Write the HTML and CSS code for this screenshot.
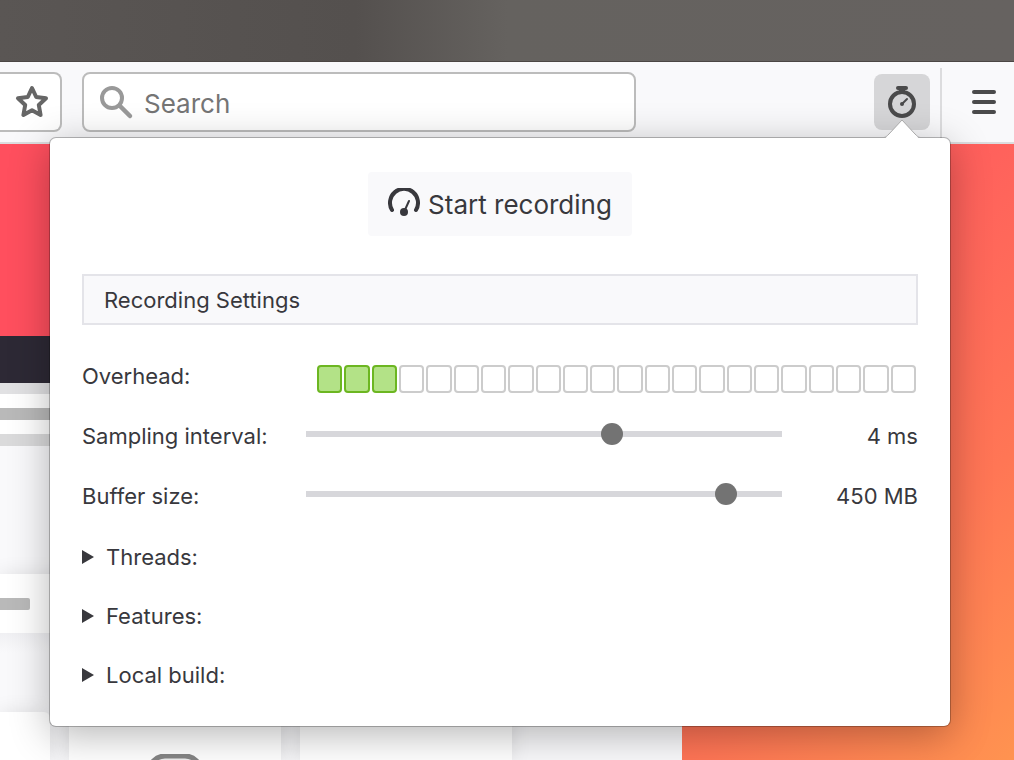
FILE: index.html
```
<!DOCTYPE html>
<html lang="en">
<head>
<meta charset="utf-8">
<title>Profiler popup</title>
<link rel="stylesheet" href="styles.css">
</head>
<body>
<div class="browser">
  <div class="titlebar"></div>
  <header class="toolbar">
    <div class="urlbar">
      <button class="star" type="button" aria-label="Bookmark">
        <svg width="36" height="36" viewBox="0 0 36 36"><path d="M18 4l4.200 9 9.800 1.200-7.200 6.800 1.800 10-8.600-4.800L9.400 31l1.800-10L4 14.200l9.800-1.200z" fill="none" stroke="#666" stroke-width="4" stroke-linejoin="round"/></svg>
      </button>
    </div>
    <label class="search">
      <svg width="36" height="36" viewBox="0 0 36 36"><circle cx="14" cy="14" r="10" fill="none" stroke="#999" stroke-width="4"/><path d="M21.500 21.500L32 32" stroke="#999" stroke-width="4.500" stroke-linecap="round"/></svg>
      <input type="search" placeholder="Search" aria-label="Search">
    </label>
    <div class="actions">
      <button class="profiler" type="button" aria-label="Profiler">
        <svg width="32" height="36" viewBox="0 0 32 36"><circle cx="16" cy="20" r="12" fill="none" stroke="#4a4a4b" stroke-width="4"/><rect x="10" y="2" width="12" height="4" rx="2" fill="#4a4a4b"/><path d="M13 5h6v4h-6z" fill="#4a4a4b"/><path d="M16 20l5-5" stroke="#4a4a4b" stroke-width="2" stroke-linecap="round"/><circle cx="16" cy="20" r="2" fill="#4a4a4b"/></svg>
      </button>
      <span class="divider"></span>
      <button class="menu" type="button" aria-label="Menu">
        <svg width="24" height="24" viewBox="0 0 24 24"><path d="M2 2h20M2 12h20M2 22h20" stroke="#4a4a4b" stroke-width="4" stroke-linecap="round"/></svg>
      </button>
    </div>
  </header>
  <main class="page">
    <div class="site">
      <div class="hero"></div>
      <div class="nav"></div>
      <div class="lines"><span class="line light"></span><span class="line dark"></span><span class="line"></span></div>
      <div class="blank"></div>
      <div class="band"><span class="stub"></span></div>
      <div class="space"></div>
      <div class="cards">
        <div class="card first"></div>
        <div class="card"><svg width="56" height="40" viewBox="0 0 56 40"><rect x="2" y="2" width="52" height="60" rx="16" fill="#eee" stroke="#858585" stroke-width="5"/></svg></div>
        <div class="card"></div>
      </div>
    </div>
  </main>

  <section class="popup" aria-label="Profiler">
    <svg class="arrow" width="36" height="20" viewBox="0 0 36 20"><path d="M0 20C2 19 3 17 5 15L18 1l13 14c2 2 3 4 5 5z" fill="#fff"/><path d="M0 18.500C2 18 3 17 5 15L18 1l13 14c2 2 3 3 5 3.500" fill="none" stroke="#aaa" stroke-width="1"/></svg>
    <button class="start" type="button">
      <svg width="32" height="32" viewBox="0 0 32 32"><path d="M4 22A14 14 0 1 1 28 22" fill="none" stroke="#38383d" stroke-width="4" stroke-linecap="round"/><circle cx="16" cy="24" r="4" fill="#38383d"/><path d="M16 24l5-11" stroke="#38383d" stroke-width="2" stroke-linecap="round"/></svg>
      Start recording
    </button>
    <h1 class="heading">Recording Settings</h1>
    <div class="settings">
      <div class="row">
        <span>Overhead:</span>
        <div class="meter">
          <i class="on"></i><i class="on"></i><i class="on"></i><i></i><i></i><i></i><i></i><i></i><i></i><i></i><i></i><i></i><i></i><i></i><i></i><i></i><i></i><i></i><i></i><i></i><i></i><i></i>
        </div>
      </div>
      <div class="row">
        <label for="interval">Sampling interval:</label>
        <input id="interval" type="range" min="0" max="100" value="65">
        <output for="interval">4 ms</output>
      </div>
      <div class="row">
        <label for="buffer">Buffer size:</label>
        <input id="buffer" type="range" min="0" max="100" value="90">
        <output for="buffer">450 MB</output>
      </div>
    </div>
    <div class="sections">
      <details><summary>Threads:</summary></details>
      <details><summary>Features:</summary></details>
      <details><summary>Local build:</summary></details>
    </div>
  </section>
</div>
</body>
</html>
```
FILE: styles.css
```
* { box-sizing: border-box; }
body {
  margin: 0;
  font-family: Inter, "Liberation Sans", sans-serif;
  font-size: 22px;
  color: #38383d;
}
button { border: 0; padding: 0; font: inherit; color: inherit; background: none; }
svg { display: block; flex: none; }
.browser {
  position: relative;
  display: flex;
  flex-direction: column;
  min-height: 100vh;
  overflow: hidden;
}
.titlebar {
  height: 62px;
  background: linear-gradient(90deg, #5a5654 0%, #54504e 35%, #65625f 50%, #666260 100%);
  border-bottom: 1px solid #4b4644;
}
.toolbar {
  display: flex;
  align-items: flex-start;
  height: 82px;
  padding-top: 10px;
  background: #f9f9fb;
  border-bottom: 2px solid #dcdcde;
}
.urlbar, .search {
  display: flex;
  align-items: center;
  height: 60px;
  background: #fff;
  border: 2px solid #bcbcbc;
  border-radius: 8px;
}
.urlbar {
  width: 62px;
  border-left: 0;
  border-radius: 0 8px 8px 0;
  padding-left: 14px;
}
.search {
  flex: 0 1 554px;
  margin-left: 20px;
  padding: 0 14px;
  gap: 10px;
}
.search input {
  flex: 1;
  min-width: 0;
  border: 0;
  padding: 2px 0 0;
  outline: 0;
  background: none;
  font: inherit;
  font-size: 26px;
}
.search input::placeholder { color: #757575; opacity: 1; }
.actions {
  display: flex;
  align-items: flex-start;
  margin-left: auto;
  padding-right: 18px;
}
.profiler {
  display: flex;
  justify-content: center;
  width: 56px;
  height: 56px;
  margin-top: 2px;
  padding-top: 10px;
  background: #d6d6d8;
  border-radius: 8px;
}
.divider {
  width: 2px;
  height: 74px;
  margin: -4px 30px 0 10px;
  background: #dcdcde;
}
.menu { margin-top: 18px; }
.page {
  flex: 1;
  background: linear-gradient(135deg, #ff4f5e 0%, #ff4f5e 45%, #ff625c 62%, #ff7655 81%, #ff9350 100%);
}
.site {
  display: flex;
  flex-direction: column;
  width: 682px;
  height: 100%;
}
.hero { height: 192px; background: #ff4f5e; }
.nav { height: 47px; background: #2d2935; }
.lines {
  display: flex;
  flex-direction: column;
  gap: 14px;
  background: #fff;
}
.line { height: 12px; background: #dadadb; }
.line.light { height: 11px; background: #e1e1e3; }
.line.dark { background: #b9b9b9; }
.blank { height: 128px; background: #f9f9fb; }
.band {
  height: 59px;
  padding-top: 24px;
  background: #fff;
  box-shadow: 0 0 20px rgba(0, 0, 0, .1);
}
.stub { display: block; width: 30px; height: 12px; background: #b9b9b9; border-radius: 0 2px 2px 0; }
.space { height: 79px; }
.blank + .band + .space { background: linear-gradient(#f0f0f3, #f9f9fb 25%); }
.cards {
  flex: 1;
  display: flex;
  gap: 19px;
  background: #f9f9fb;
}
.card {
  display: flex;
  justify-content: center;
  width: 212px;
  height: 48px;
  padding-top: 42px;
  overflow: hidden;
  background: #fff;
  box-shadow: 0 0 20px rgba(0, 0, 0, .1);
}
.card.first { width: 50px; border-radius: 0 6px 0 0; }
.popup {
  position: absolute;
  top: 138px;
  left: 50px;
  right: 64px;
  padding: 34px 32px 22px;
  background: #fff;
  border-radius: 6px;
  box-shadow: 0 0 0 1px rgba(0, 0, 0, .25), 0 8px 40px rgba(0, 0, 0, .3);
}
.arrow {
  position: absolute;
  top: -19px;
  right: 30px;
}
.start {
  display: flex;
  align-items: center;
  justify-content: center;
  gap: 8px;
  width: 264px;
  height: 64px;
  margin: 0 auto 38px;
  font-size: 26px;
  background: #f9f9fb;
  border-radius: 4px;
}
.heading {
  height: 51px;
  margin: 0 0 21px;
  padding: 0 20px;
  border: 2px solid #e4e4e9;
  background: #f9f9fb;
  font-size: 22px;
  font-weight: 400;
  line-height: 48px;
}
.row {
  display: grid;
  grid-template-columns: 224px 1fr 136px;
  align-items: center;
  height: 60px;
}
.row output { text-align: right; }
.meter {
  grid-column: 2 / 4;
  display: flex;
  gap: 2px;
  margin: 6px 2px 0 11px;
}
.meter i {
  flex: 1;
  height: 28px;
  border: 2px solid #ccc;
  border-radius: 4px;
}
.meter .on { background: #b3e287; border-color: #6cb621; }
input[type="range"] {
  appearance: none;
  width: 100%;
  height: 22px;
  margin: 0 0 4px;
  background: none;
}
input[type="range"]::-webkit-slider-runnable-track { height: 6px; background: #d7d7db; }
input[type="range"]::-webkit-slider-thumb {
  appearance: none;
  width: 22px;
  height: 22px;
  margin-top: -8px;
  border-radius: 50%;
  background: #737373;
}
.sections { padding-top: 1px; }
summary {
  display: flex;
  align-items: center;
  gap: 12px;
  height: 59px;
}
summary::before {
  content: "";
  border-left: 12px solid #38383d;
  border-top: 7px solid transparent;
  border-bottom: 7px solid transparent;
}
```
